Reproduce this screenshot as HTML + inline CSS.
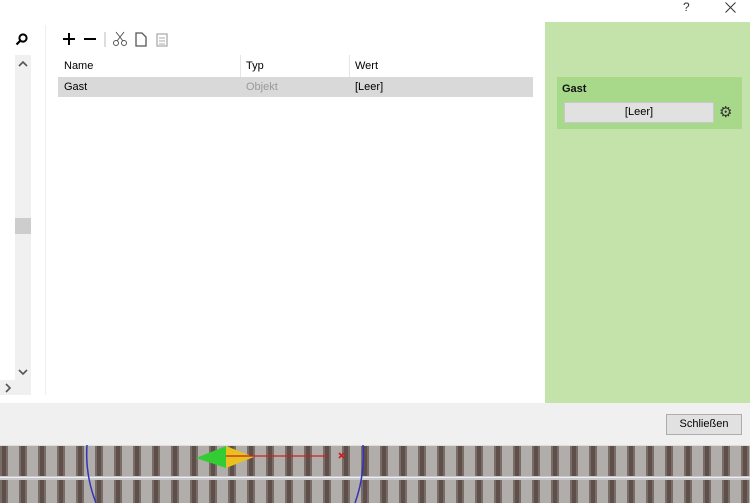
<!DOCTYPE html><html><head><style>
body{margin:0;width:750px;height:503px;position:relative;overflow:hidden;background:#fff;font-family:"Liberation Sans",sans-serif;font-size:11px;color:#000}
.a{position:absolute}
</style></head><body>
<div class="a" style="left:683px;top:0;font-size:12px;color:#333">?</div>
<svg class="a" style="left:725px;top:2px" width="11" height="11"><path d="M0.5 0.5L10.5 10.5M10.5 0.5L0.5 10.5" stroke="#333" stroke-width="1"/></svg>
<svg class="a" style="left:14px;top:32px" width="16" height="16"><circle cx="9" cy="6" r="3.6" fill="none" stroke="#000" stroke-width="2"/><line x1="6.5" y1="8.5" x2="2.5" y2="12.5" stroke="#000" stroke-width="2.2"/></svg>
<div class="a" style="left:15px;top:55px;width:16px;height:325px;background:#f0f0f0"></div>
<div class="a" style="left:0;top:380px;width:31px;height:15px;background:#f0f0f0"></div>
<div class="a" style="left:15px;top:218px;width:16px;height:16px;background:#cdcdcd"></div>
<svg class="a" style="left:18px;top:60px" width="10" height="8"><path d="M1 6L5 2L9 6" stroke="#555" stroke-width="1.6" fill="none"/></svg>
<svg class="a" style="left:18px;top:368px" width="10" height="8"><path d="M1 2L5 6L9 2" stroke="#555" stroke-width="1.6" fill="none"/></svg>
<svg class="a" style="left:4px;top:383px" width="8" height="10"><path d="M2 1L6 5L2 9" stroke="#555" stroke-width="1.6" fill="none"/></svg>
<div class="a" style="left:45px;top:25px;width:1px;height:370px;background:#eee"></div>
<svg class="a" style="left:60px;top:30px" width="120" height="18">
<path d="M3 9h12M9 3v12" stroke="#000" stroke-width="2"/><path d="M24 9h12" stroke="#000" stroke-width="2"/>
<line x1="45" y1="2" x2="45" y2="17" stroke="#bbb"/>
<circle cx="56" cy="13" r="2.5" fill="none" stroke="#555"/><circle cx="64" cy="13" r="2.5" fill="none" stroke="#555"/><path d="M57 11L64 2M63 11L56 2" stroke="#555"/>
<path d="M76 3h6l4 4v9h-10z" fill="none" stroke="#555" stroke-width="1.3"/>
<path d="M97 4h10v12h-10z" fill="none" stroke="#aaa" stroke-width="1.3"/><path d="M99 8h6M99 11h6M99 14h6" stroke="#aaa"/>
</svg>
<div class="a" style="left:58px;top:55px;width:475px;height:22px;border-bottom:1px solid #e5e5e5"></div>
<div class="a" style="left:240px;top:55px;width:1px;height:22px;background:#e5e5e5"></div>
<div class="a" style="left:349px;top:55px;width:1px;height:22px;background:#e5e5e5"></div>
<div class="a" style="left:64px;top:60px">Name</div>
<div class="a" style="left:246px;top:60px">Typ</div>
<div class="a" style="left:355px;top:60px">Wert</div>
<div class="a" style="left:58px;top:77px;width:475px;height:20px;background:#d9d9d9"></div>
<div class="a" style="left:64px;top:81px">Gast</div>
<div class="a" style="left:246px;top:81px;color:#999">Objekt</div>
<div class="a" style="left:355px;top:81px">[Leer]</div>
<div class="a" style="left:545px;top:22px;width:205px;height:381px;background:#c3e3aa"></div>
<div class="a" style="left:557px;top:77px;width:185px;height:52px;background:#a8d98a"></div>
<div class="a" style="left:562px;top:83px;font-weight:bold;color:#111">Gast</div>
<div class="a" style="left:564px;top:102px;width:148px;height:19px;background:#e1e1e1;border:1px solid #c8c8c8;text-align:center;line-height:19px">[Leer]</div>
<div class="a" style="left:719px;top:103px;font-size:15px;color:#333">⚙</div>
<div class="a" style="left:0;top:403px;width:750px;height:42px;background:#f0f0f0"></div>
<div class="a" style="left:666px;top:414px;width:74px;height:19px;background:#e1e1e1;border:1px solid #adadad;text-align:center;line-height:19px">Schließen</div>
<div class="a" style="left:0;top:445px;width:750px;height:58px;background:repeating-linear-gradient(90deg,#7a6c67 0 2px,#5e4f4a 2px 6px,#7a6c67 6px 8px,#b0adab 8px 19px)"></div>
<div class="a" style="left:0;top:445px;width:750px;height:1px;background:#ddd"></div>
<div class="a" style="left:0;top:476px;width:750px;height:4px;background:#c8c8cc"></div>
<div class="a" style="left:0;top:477px;width:750px;height:1px;background:#eee"></div>
<svg class="a" style="left:0;top:445px" width="750" height="58">
<path d="M87 0Q85 30 96 58" stroke="#3333bb" fill="none" stroke-width="1.5"/>
<path d="M363 0Q365 30 355 58" stroke="#3333bb" fill="none" stroke-width="1.5"/>
<path d="M196 13L226 1V23Z" fill="#33cc33"/><path d="M226 1L254 12L226 23Z" fill="#e8c020"/>
<line x1="226" y1="11" x2="328" y2="11" stroke="#cc2222" stroke-width="1.3"/>
<path d="M339 8l5 5M344 8l-5 5" stroke="#cc2222" stroke-width="1.8"/>
</svg>
</body></html>
